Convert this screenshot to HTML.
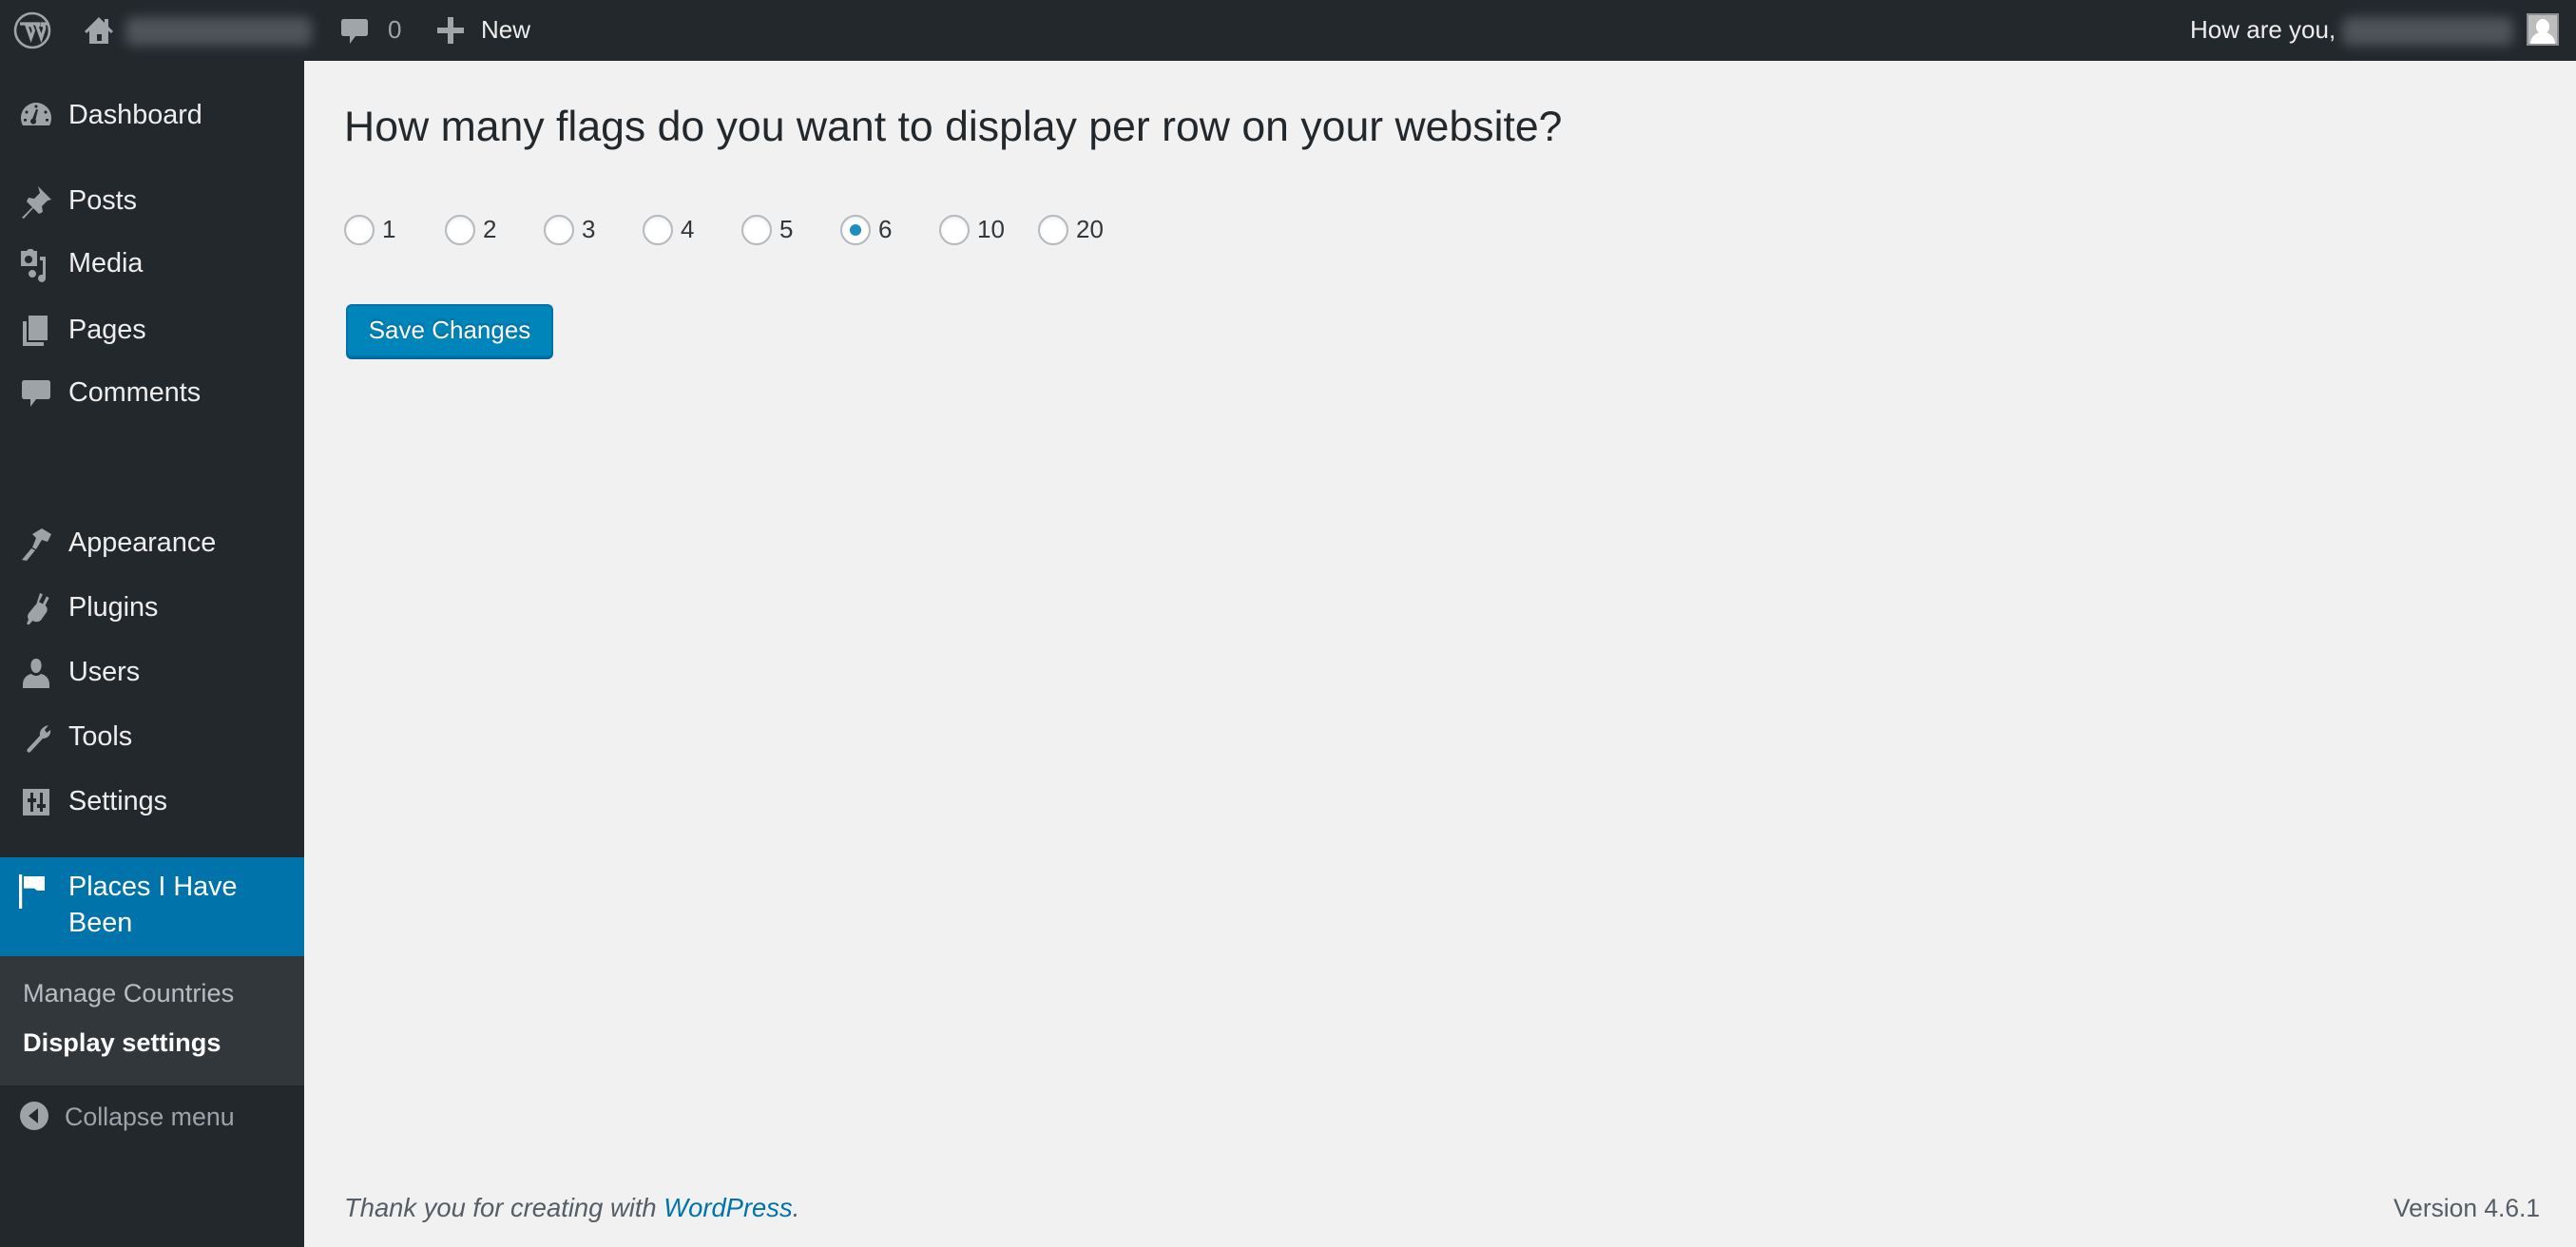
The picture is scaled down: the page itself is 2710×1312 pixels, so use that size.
<!DOCTYPE html>
<html><head><meta charset="utf-8"><style>
*{margin:0;padding:0;box-sizing:border-box}
html,body{width:2710px;height:1312px;overflow:hidden;background:#f1f1f1}
#w{position:absolute;left:0;top:0;width:1355px;height:656px;transform:scale(2);transform-origin:0 0;font-family:"Liberation Sans",Arial,sans-serif;color:#23282d}
.bar{position:absolute;left:0;top:0;width:1355px;height:32px;background:#23282d;color:#eee;font-size:13px}
.bar .t{position:absolute;top:0;line-height:32px}
.side{position:absolute;left:0;top:32px;width:160px;height:624px;background:#23282d}
.mi{position:absolute;left:0;width:160px;height:34px;color:#eee;font-size:14.4px;line-height:34px}
.mi span{position:absolute;left:36px}
.mi svg{position:absolute;left:9px;top:7px;width:20px;height:20px;fill:#9ea3a8}
.r{position:absolute;top:113px;height:16px;font-size:13px;line-height:16px;color:#32373c}
.r i{position:absolute;left:0;top:0;width:16px;height:16px;border:1px solid #b4b9be;border-radius:50%;background:#fff;box-shadow:inset 0 1px 2px rgba(0,0,0,.07)}
.r b{position:absolute;left:20px;font-weight:normal}
</style></head><body><div id="w">
<div class="bar">
<svg style="position:absolute;left:7px;top:6px" width="20" height="20" viewBox="0 0 20 20"><circle cx="10" cy="10" r="9" fill="none" stroke="#a0a5aa" stroke-width="1.3"/><path d="M3.5 6.5h4.5v.8l-1 .2 2.3 6.6 1.4-4-1-2.6-.8-.2v-.8h4.5v.8l-1 .2 2.3 6.6 1.5-4.6c.5-1.6-.2-2.2-1-2.2v-.8h3.2" fill="none" stroke="#a0a5aa" stroke-width="1.6"/></svg>
<svg style="position:absolute;left:44px;top:8px" width="16" height="16" viewBox="0 0 16 16"><path d="M8 1L0.5 8.5 1.6 9.5 3 8.2V15h10V8.2l1.4 1.3 1.1-1L13 6V2h-2v2z" fill="#a0a5aa"/><rect x="7" y="10" width="2.5" height="3.5" fill="#23282d"/></svg>
<div style="position:absolute;left:66px;top:9px;width:98px;height:15px;background:#4f5459;filter:blur(3px);border-radius:4px"></div>
<svg style="position:absolute;left:179px;top:9px" width="16" height="17" viewBox="0 0 16 17"><path d="M2 1h11c1 0 1.5.5 1.5 1.5v6c0 1-.5 1.5-1.5 1.5H8L5 14v-4H2C1 10 .5 9.5.5 8.5v-6C.5 1.5 1 1 2 1z" fill="#a0a5aa"/></svg>
<div class="t" style="left:204px;color:#a0a5aa">0</div>
<svg style="position:absolute;left:230px;top:9px" width="14" height="14" viewBox="0 0 14 14"><path d="M5.5 0h3v5.5H14v3H8.5V14h-3V8.5H0v-3h5.5z" fill="#a0a5aa"/></svg>
<div class="t" style="left:253px;color:#eee">New</div>
<div class="t" style="left:1152px">How are you,</div>
<div style="position:absolute;left:1232px;top:9px;width:90px;height:15px;background:#4f5459;filter:blur(3px);border-radius:4px"></div>
<div style="position:absolute;left:1329px;top:7px;width:17px;height:17px;background:#bdbdbd;border:1px solid #8c8f94;overflow:hidden"><div style="position:absolute;left:4px;top:2px;width:7px;height:8px;border-radius:50%;background:#fff"></div><div style="position:absolute;left:1px;top:9px;width:13px;height:8px;border-radius:6px 6px 0 0;background:#fff"></div></div>
</div>
<div class="side">
<div class="mi" style="top:12px"><svg viewBox="0 0 20 20"><path d="M10 3a8 8 0 0 0-8 8c0 1.5.4 2.9 1 4h14c.7-1.1 1-2.5 1-4a8 8 0 0 0-8-8zm0 3.5 1 .1-1.3 5.3a1.5 1.5 0 1 1-1.6-.5zM5 7l1 1-1 1-1-1zm10 0 1 1-1 1-1-1zM10 4l1 1-1 1-1-1zM3.5 11.5h1.5v1.3H3.5zm11.5 0h1.5v1.3H15z"/></svg><span>Dashboard</span></div>
<div class="mi" style="top:57px"><svg viewBox="0 0 20 20"><path d="M11 2l7 7-2 .5-3 3 .5 3-2 1-3-3-5 5.5-1-.5L8 13 5 10l1-2 3 .5 3-3z"/></svg><span>Posts</span></div>
<div class="mi" style="top:90px"><svg viewBox="0 0 20 20"><path d="M2 3h3l1-1h2l1 1h1.5v8H2zm4 2.5a2 2 0 1 0 0 4 2 2 0 0 0 0-4zM12 6h3v11.5a2 2 0 1 1-1.5-2V8H12zm-4 7a2 2 0 0 1 0 4 2 2 0 0 1 0-4z"/></svg><span>Media</span></div>
<div class="mi" style="top:125px"><svg viewBox="0 0 20 20"><path d="M6 2h10v13H6zM3 5h2v11h9v2H3z"/></svg><span>Pages</span></div>
<div class="mi" style="top:158px"><svg viewBox="0 0 20 20"><path d="M4 3h12c1 0 1.5.5 1.5 1.5v7c0 1-.5 1.5-1.5 1.5h-6l-3 4v-4H4c-1 0-1.5-.5-1.5-1.5v-7C2.5 3.5 3 3 4 3z"/></svg><span>Comments</span></div>
<div class="mi" style="top:237px"><svg viewBox="0 0 20 20"><path d="M13 2l5 3-2 4-3-1-3 5-2-1 2-5-2-2zM7.5 12.5l2 1L5 19l-2.5-.5z"/></svg><span>Appearance</span></div>
<div class="mi" style="top:271px"><svg viewBox="0 0 20 20"><path d="M12 2l1.5.7-2 4 2 1 2-4 1.3.8-2 4c1.2 1 1.4 2.5.4 4l-2.5 3.5c-1 1.3-3 1.5-4.5.5l-2 2.2-1.2-.5L6 16c-.8-1.5-.5-3 .6-4l2.4-3 1.2-1.3z"/></svg><span>Plugins</span></div>
<div class="mi" style="top:305px"><svg viewBox="0 0 20 20"><path d="M10 2.5c1.7 0 2.8 1.5 2.8 3.5s-1 4-2.8 4-2.8-2-2.8-4S8.3 2.5 10 2.5zM3 16c0-3 2-5 4.5-5.5 1 .8 1.7 1 2.5 1s1.5-.2 2.5-1C15 11 17 13 17 16v2H3z"/></svg><span>Users</span></div>
<div class="mi" style="top:339px"><svg viewBox="0 0 20 20"><path d="M16.5 3.5l-2 2.5 1 1.5 2-1.5c.5 2-1 4.5-4 4.5l-6.5 7c-1 1-2.5-.5-1.5-1.5l6.5-7c-.5-3 2-5 4.5-5.5z"/></svg><span>Tools</span></div>
<div class="mi" style="top:373px"><svg viewBox="0 0 20 20"><path d="M3 3h14v14H3zm4 2v3H5.5v2H7v5h1.5v-5H10V8H8.5V5zm5 0v6h-1.5v2H12v2h1.5v-2H15v-2h-1.5V5z"/></svg><span>Settings</span></div>
<div style="position:absolute;left:0;top:419px;width:160px;height:52px;background:#0073aa"></div>
<div style="position:absolute;left:152px;top:437px;width:0;height:0;border:8px solid transparent;border-right-color:#f1f1f1"></div>
<svg style="position:absolute;left:9px;top:427px" width="20" height="20" viewBox="0 0 20 20"><rect x="1" y="1" width="1.6" height="18" fill="#fff"/><path d="M3.5 2h11v7.5h-4l-1.5-1.2H3.5z" fill="#fff"/></svg>
<div style="position:absolute;left:36px;top:426px;color:#fff;font-size:14.4px;line-height:18.5px">Places I Have<br>Been</div>
<div style="position:absolute;left:0;top:471px;width:160px;height:68px;background:#32373c"></div>
<div style="position:absolute;left:12px;top:483px;color:rgba(240,245,250,.7);font-size:13.6px">Manage Countries</div>
<div style="position:absolute;left:12px;top:509px;color:#fff;font-size:13.6px;font-weight:bold">Display settings</div>
<svg style="position:absolute;left:10px;top:547px" width="16" height="16" viewBox="0 0 16 16"><circle cx="8" cy="8" r="7.5" fill="#9ea3a8"/><path d="M10 4v8L5 8z" fill="#23282d"/></svg>
<div style="position:absolute;left:34px;top:548px;color:#9ea3a8;font-size:13.4px">Collapse menu</div>
</div>
<div style="position:absolute;left:181px;top:54px;font-size:22.3px;line-height:26px;color:#23282d">How many flags do you want to display per row on your website?</div>
<div class="r" style="left:181px"><i></i><b>1</b></div>
<div class="r" style="left:234px"><i></i><b>2</b></div>
<div class="r" style="left:286px"><i></i><b>3</b></div>
<div class="r" style="left:338px"><i></i><b>4</b></div>
<div class="r" style="left:390px"><i></i><b>5</b></div>
<div class="r" style="left:442px"><i><span style="position:absolute;left:4px;top:4px;width:6px;height:6px;border-radius:50%;background:#1e8cbe"></span></i><b>6</b></div>
<div class="r" style="left:494px"><i></i><b>10</b></div>
<div class="r" style="left:546px"><i></i><b>20</b></div>
<div style="position:absolute;left:182px;top:160px;width:109px;height:28px;background:#0085ba;border:1px solid #0073aa;border-radius:3px;box-shadow:0 1px 0 #006799;color:#fff;font-size:13px;line-height:26px;text-align:center;text-shadow:0 -1px 1px #006799">Save Changes</div>
<div style="position:absolute;left:181px;top:628px;font-size:13.7px;font-style:italic;color:#555d66">Thank you for creating with <span style="color:#0073aa">WordPress</span>.</div>
<div style="position:absolute;right:19px;top:628px;font-size:13.2px;color:#555d66">Version 4.6.1</div>
</div></body></html>
